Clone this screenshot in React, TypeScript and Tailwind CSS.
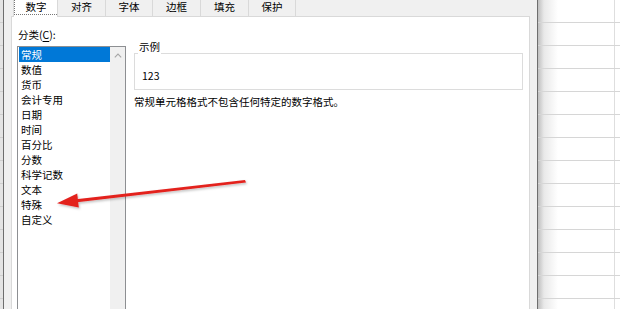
import React from "react";

const items = ["常规", "数值", "货币", "会计专用", "日期", "时间", "百分比", "分数", "科学记数", "文本", "特殊", "自定义"];
const tabs: { label: string; w: string }[] = [
  { label: "对齐", w: "w-[48px]" },
  { label: "字体", w: "w-[47px]" },
  { label: "边框", w: "w-[48px]" },
  { label: "填充", w: "w-[48px]" },
  { label: "保护", w: "w-[47px]" },
];

export default function App() {
  const rows = Array.from({ length: 14 });
  return (
    <div className="relative flex h-[309px] w-[620px] overflow-hidden bg-white font-['Noto_Sans_CJK_SC','Noto_Sans',sans-serif] text-[10.5px] text-black">
      {/* left spreadsheet strip */}
      <div className="flex w-[3px] flex-col bg-[#e4e4e4]">
        {rows.map((_, i) => (
          <div key={i} className="h-[23px] shrink-0 border-b border-[#cfcfcf]" />
        ))}
      </div>

      {/* dialog */}
      <div className="flex h-[360px] w-[535px] shrink-0 flex-col border-x border-[#6e6e6e] bg-[#f0f0f0] px-[7px]">
        {/* tabs */}
        <div className="flex h-[16px] shrink-0 pl-[2px]">
          <div className="relative z-10 flex h-[17px] w-[45px] items-start justify-center border-x border-[#d9d9d9] bg-white">
            <div className="flex h-[15px] w-[43px] items-center justify-center border-b border-l border-dotted border-[#777] pb-[1px] leading-[14px]">
              数字
            </div>
          </div>
          {tabs.map((t) => (
            <div
              key={t.label}
              className={`flex h-[16px] ${t.w} items-center justify-center border-r border-[#d9d9d9] bg-[#f0f0f0] pb-[2px] leading-[14px]`}
            >
              {t.label}
            </div>
          ))}
        </div>

        {/* tab page */}
        <div className="flex flex-1 border-x border-t border-[#d9d9d9] bg-white">
          {/* left column */}
          <div className="ml-[5px] flex w-[109px] flex-col">
            <div className="mt-[10px] h-[16px] pl-[1px] leading-[16px]">
              分类(<span className="underline underline-offset-2">C</span>):
            </div>
            <div className="mt-[3px] flex flex-1 border border-[#8d8f92]">
              <div className="flex w-[92px] flex-col pl-[1px]">
                {items.map((it, i) => (
                  <div
                    key={it}
                    className={`h-[15px] pl-[2px] leading-[15px] ${i === 0 ? "bg-[#0078d7] text-white" : ""}`}
                  >
                    {it}
                  </div>
                ))}
              </div>
              <div className="flex w-[15px] flex-col bg-[#f0f0f0]">
                <div className="flex h-[17px] items-center justify-center">
                  <svg width="8" height="5" viewBox="0 0 8 5">
                    <path d="M0.8 4.3 L4 1.1 L7.2 4.3" fill="none" stroke="#a6a6a6" strokeWidth="1.1" />
                  </svg>
                </div>
              </div>
            </div>
          </div>

          {/* right column */}
          <div className="ml-[8px] flex w-[389px] flex-col">
            <div className="relative mt-[36px] h-[37px] border border-[#dcdcdc]">
              <div className="absolute -top-[14px] left-[3px] h-[16px] bg-white px-[1px] leading-[14px]">示例</div>
              <div className="pl-[7px] pt-[14px] leading-[16px]">123</div>
            </div>
            <div className="mt-[4px] leading-[16px]">常规单元格格式不包含任何特定的数字格式。</div>
          </div>
        </div>
      </div>

      {/* right spreadsheet */}
      <div className="flex flex-1 flex-col bg-[linear-gradient(to_right,#bfbfbf_0px,#e9e9e9_6px,#ffffff_20px)]">
        {rows.map((_, i) => (
          <div key={i} className="flex h-[23px] shrink-0 border-b border-[#d6d6d6]">
            <div className="w-[77px] border-r border-[#dedede]" />
            <div className="flex-1" />
          </div>
        ))}
      </div>

      {/* red arrow annotation */}
      <svg className="pointer-events-none absolute left-0 top-0" width="620" height="309" viewBox="0 0 620 309">
        <defs>
          <filter id="sh" x="-10%" y="-50%" width="120%" height="200%">
            <feDropShadow dx="1" dy="1.5" stdDeviation="1.2" floodColor="#000" floodOpacity="0.25" />
          </filter>
        </defs>
        <g filter="url(#sh)">
          <path d="M245 180 L246 182.6 L77 202.2 L76 199.2 Z" fill="#e3211f" />
          <path d="M57 203.3 L77.2 193.6 L78.8 207.6 Z" fill="#e3211f" />
        </g>
      </svg>
    </div>
  );
}
